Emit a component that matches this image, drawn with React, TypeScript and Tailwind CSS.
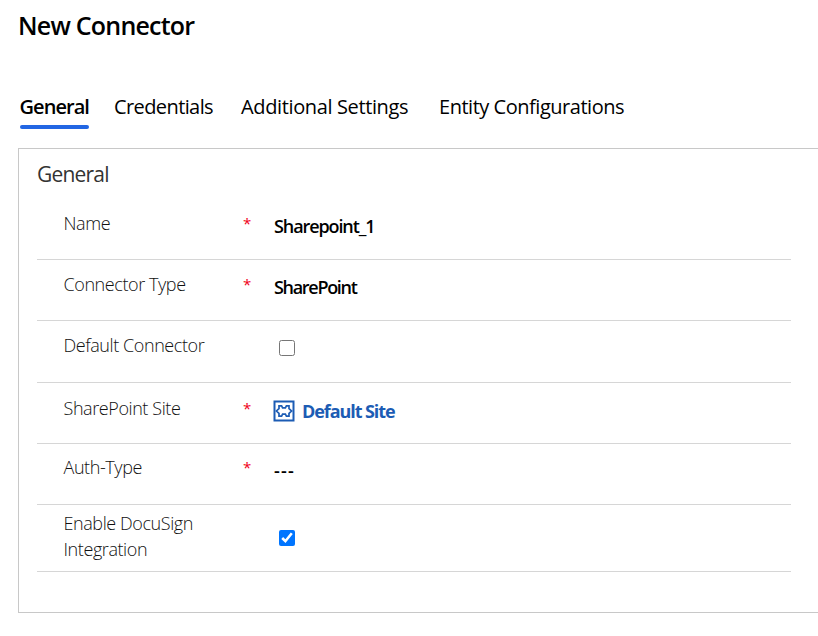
import type { ReactNode } from 'react';

function Row({ label, className, required, children }: {
  label: ReactNode;
  className: string;
  required?: boolean;
  children: ReactNode;
}) {
  return (
    <div className={`flex items-start border-b border-[#d6d6d6] pl-[26px] leading-[26px] ${className}`}>
      <div className="w-[180px] shrink-0 whitespace-nowrap pl-[0.5px] font-light tracking-[-0.42px] text-[#111]">{label}</div>
      <div className="w-[31px] shrink-0 text-[15px] text-[#f00018]">{required ? '*' : ''}</div>
      {children}
    </div>
  );
}

function SiteIcon() {
  return (
    <svg width="22" height="22" viewBox="0 0 22 22" fill="none" stroke="#1c5cb4" strokeWidth="2">
      <rect x="1.5" y="1.5" width="19" height="19" />
      <path strokeWidth="1.7" d="M6 5.9h2.6l1 1.9h2.8l1-1.9H16v2.7l2.6 2.4-2.6 2.4v2.7h-2.6l-1-1.9H9.6l-1 1.9H6v-2.7L3.4 11 6 8.6z" />
    </svg>
  );
}

export default function App() {
  return (
    <main className="h-[636px] w-[818px] overflow-hidden bg-white pl-[18px] pt-[8px] font-['Open_Sans','Noto_Sans',sans-serif] text-[18px] text-black">
      <h1 className="h-[85px] whitespace-nowrap text-[25px] font-semibold leading-[34px] tracking-[-0.78px]">New Connector</h1>
      <nav className="flex h-[55px] whitespace-nowrap pl-[2px] text-[20px] leading-[28px]">
        <div className="mr-[25px] h-9 w-[69px] shrink-0">
          <div className="-ml-[0.5px] h-8 font-semibold tracking-[-0.95px]">General</div>
          <div className="h-1 rounded-full bg-[#2266e3]" />
        </div>
        <div className="w-[127px] shrink-0 tracking-[-0.6px]">Credentials</div>
        <div className="w-[198px] shrink-0 tracking-[-0.37px]">Additional Settings</div>
        <div className="shrink-0 tracking-[-0.47px]">Entity Configurations</div>
      </nav>
      <section className="h-[465px] border border-r-0 border-[#c8c8c8] pl-[18px] pr-[27px]">
        <h2 className="h-[50px] pt-[11px] text-[21px] leading-[28px] tracking-[-0.8px] text-[#333]">General</h2>
        <Row label="Name" required className="h-[61px] pt-[11px]">
          <span className="pt-[3px] font-semibold tracking-[-1.1px]">Sharepoint_1</span>
        </Row>
        <Row label="Connector Type" required className="h-[61px] pt-[11px]">
          <span className="pt-[3px] font-semibold tracking-[-1.3px]">SharePoint</span>
        </Row>
        <Row label="Default Connector" className="h-[62px] pt-[11px]">
          <input type="checkbox" className="ml-[5px] mt-[8px] size-4" />
        </Row>
        <Row label="SharePoint Site" required className="h-[61px] pt-[12px]">
          <div className="-ml-px flex pt-[3px] font-bold text-[#1c5cb4]">
            <span className="mr-[7px] pt-[2px]"><SiteIcon /></span>
            <span className="tracking-[-1.08px]">Default Site</span>
          </div>
        </Row>
        <Row label="Auth-Type" required className="h-[61px] pt-[10px]">
          <span className="pt-[3px] font-semibold tracking-[1.2px]">---</span>
        </Row>
        <Row label={<>Enable DocuSign<br />Integration</>} className="h-[67px] pt-[5px]">
          <input type="checkbox" defaultChecked className="ml-[5px] mt-[20px] size-4" />
        </Row>
      </section>
    </main>
  );
}
